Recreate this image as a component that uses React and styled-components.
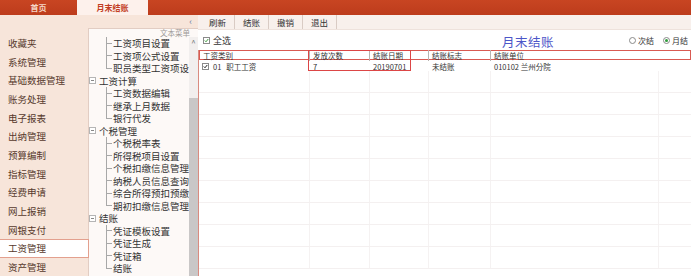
import React from 'react';
import styled, { createGlobalStyle } from 'styled-components';

const GlobalStyle = createGlobalStyle`
  html, body {
    margin: 0;
    padding: 0;
    background: #fff;
  }
  body {
    font-family: "Noto Sans CJK SC", "Noto Sans", sans-serif;
    color: #333;
  }
`;

const menu = [
  '收藏夹', '系统管理', '基础数据管理', '账务处理', '电子报表', '出纳管理', '预算编制',
  '指标管理', '经费申请', '网上报销', '网银支付', '工资管理', '资产管理',
];

const tree = [
  { t: '工资项目设置', lvl: 2 },
  { t: '工资项公式设置', lvl: 2 },
  { t: '职员类型工资项设', lvl: 2, last: true },
  { t: '工资计算', lvl: 1 },
  { t: '工资数据编辑', lvl: 2 },
  { t: '继承上月数据', lvl: 2 },
  { t: '银行代发', lvl: 2, last: true },
  { t: '个税管理', lvl: 1 },
  { t: '个税税率表', lvl: 2 },
  { t: '所得税项目设置', lvl: 2 },
  { t: '个税扣缴信息管理', lvl: 2 },
  { t: '纳税人员信息查询', lvl: 2 },
  { t: '综合所得预扣预缴', lvl: 2 },
  { t: '期初扣缴信息管理', lvl: 2, last: true },
  { t: '结账', lvl: 1 },
  { t: '凭证模板设置', lvl: 2 },
  { t: '凭证生成', lvl: 2 },
  { t: '凭证箱', lvl: 2 },
  { t: '结账', lvl: 2, last: true },
];

const columns = ['工资类别', '发放次数', '结账日期', '结账标志', '结账单位'];

const Page = styled.div`
  width: 691px;
  height: 276px;
  overflow: hidden;
  display: grid;
  grid-template-rows: 15px 1fr;
`;

const TabBar = styled.div`
  display: flex;
  background: linear-gradient(#c84522, #bd3c1c);
`;

const Tab = styled.div`
  width: ${p => p.w}px;
  display: flex;
  align-items: center;
  justify-content: center;
  font-size: 8px;
  font-weight: 700;
  color: ${p => (p.active ? '#c23c22' : '#f5d6c6')};
  background: ${p => (p.active ? '#fdf1ec' : 'transparent')};
`;

const Body = styled.div`
  display: flex;
  min-height: 0;
`;

const LeftPane = styled.div`
  width: 198px;
  flex: none;
  background: #f7e5da;
  display: grid;
  grid-template-columns: 88px 110px;
  grid-template-rows: 13px 1fr;
  min-height: 0;
`;

const Sidebar = styled.div`
  grid-row: 1 / 3;
  padding-top: 18.7px;
  position: relative;
  z-index: 1;
`;

const MenuItem = styled.div`
  height: 18.67px;
  box-sizing: border-box;
  display: flex;
  align-items: center;
  padding-left: 8px;
  font-size: 9.5px;
  color: #56392c;
  background: ${p => (p.active ? '#fff' : 'transparent')};
  border: 1px solid ${p => (p.active ? '#e3a08e' : 'transparent')};
  border-left: none;
  margin-right: ${p => (p.active ? '-1px' : '0')};
`;

const Collapse = styled.div`
  display: flex;
  align-items: center;
  justify-content: flex-end;
  padding-right: 6px;
  font-size: 9px;
  color: #6a7ca6;
`;

const TreePanel = styled.div`
  background: #fdf9f7;
  border-left: 1px solid #e2cdc3;
  border-top: 1px solid #e2cdc3;
  display: flex;
  flex-direction: column;
  min-height: 0;
`;

const TreeHeader = styled.div`
  height: 8px;
  text-align: right;
  padding-right: 8px;
  font-size: 7.5px;
  line-height: 8px;
  color: #a09a98;
`;

const TreeBody = styled.div`
  flex: 1;
  display: flex;
  min-height: 0;
`;

const TreeList = styled.div`
  flex: 1;
  overflow: hidden;
  white-space: nowrap;
`;

const TreeRow = styled.div`
  height: 12.5px;
  display: flex;
  align-items: center;
  padding-left: ${p => (p.lvl === 1 ? 0 : 17)}px;
  font-size: 9.5px;
  color: #333;
`;

const Connector = styled.span`
  flex: none;
  align-self: stretch;
  width: 6px;
  margin-right: 1px;
  background:
    linear-gradient(#a8a8a8, #a8a8a8) left top / 1px ${p => (p.last ? '50%' : '100%')} no-repeat,
    linear-gradient(#a8a8a8, #a8a8a8) left center / 100% 1px no-repeat;
`;

const Expander = styled.svg`
  flex: none;
  margin-right: 3px;
`;

const Scrollbar = styled.div`
  width: 9px;
  flex: none;
  display: flex;
  flex-direction: column;
  background: #f2efee;
`;

const ScrollUp = styled.div`
  height: 11px;
  display: flex;
  align-items: center;
  justify-content: center;
  font-size: 8px;
  color: #777;
`;

const Thumb = styled.div`
  flex: 1;
  margin-top: 50px;
  background: #c9c7c7;
`;

const Main = styled.div`
  flex: 1;
  display: flex;
  flex-direction: column;
  min-width: 0;
`;

const Toolbar = styled.div`
  height: 15px;
  flex: none;
  display: flex;
  padding-left: 3px;
  background: #f8f0ec;
  border-bottom: 1px solid #eee2dc;
  box-sizing: border-box;
`;

const ToolButton = styled.div`
  width: 34px;
  box-sizing: border-box;
  border-right: 1px solid #d9cbc4;
  display: flex;
  align-items: center;
  justify-content: center;
  font-size: 8.5px;
  color: #333;
`;

const OptionsRow = styled.div`
  height: 20px;
  flex: none;
  display: flex;
  align-items: center;
  padding-left: 5px;
  padding-right: 3px;
`;

const SelectAll = styled.div`
  width: 299px;
  display: flex;
  align-items: center;
  font-size: 9px;
  color: #333;
  gap: 3px;
`;

const Box = styled.span`
  width: 7px;
  height: 7px;
  box-sizing: border-box;
  border: 1px solid #8a8a8a;
  background: #fff;
  display: inline-flex;
  align-items: center;
  justify-content: center;
  flex: none;
`;

const Title = styled.div`
  font-size: 12.5px;
  letter-spacing: 0.5px;
  color: #4c56c8;
  margin-top: 2px;
`;

const Radios = styled.div`
  margin-left: auto;
  display: flex;
  gap: 9px;
`;

const Radio = styled.div`
  display: flex;
  align-items: center;
  gap: 2px;
  font-size: 8px;
  color: #333;
`;

const Circle = styled.span`
  width: 7px;
  height: 7px;
  box-sizing: border-box;
  border-radius: 50%;
  border: 1px solid #8a8a8a;
  background: #fff;
  display: inline-flex;
  align-items: center;
  justify-content: center;
  &::after {
    content: '';
    width: 3px;
    height: 3px;
    border-radius: 50%;
    background: ${p => (p.checked ? '#2f9b3c' : 'transparent')};
  }
`;

const TableWrap = styled.div`
  flex: 1;
  position: relative;
  border-left: 1px solid #d98b80;
  overflow: hidden;
`;

const Row = styled.div`
  display: grid;
  grid-template-columns: 110px 60px 59px 62px 168px 33px;
  width: max-content;
  height: ${p => p.h}px;
  box-shadow: ${p => (p.head ? 'inset 0 0 0 1px #d95a52' : 'none')};
  border-bottom: 1px solid ${p => (p.faint ? '#f4f0f0' : 'transparent')};
  box-sizing: border-box;
`;

const Cell = styled.div`
  display: flex;
  align-items: center;
  gap: 4px;
  padding-left: 3px;
  font-size: 7.5px;
  color: #333;
  white-space: nowrap;
  border-left: 1px solid ${p => (p.line ? p.line : 'transparent')};
`;

const Highlight = styled.div`
  position: absolute;
  left: 109px;
  top: 0;
  width: 103px;
  height: 21px;
  box-sizing: border-box;
  border: 1.5px solid #dc4646;
  pointer-events: none;
`;

const Check = ({ color }) => (
  <svg width="5" height="5" viewBox="0 0 10 10">
    <path d="M1.5 5 L4 7.5 L8.5 2" fill="none" stroke={color} strokeWidth="2" />
  </svg>
);

const Minus = () => (
  <Expander width="7" height="7" viewBox="0 0 7 7">
    <rect x="0.5" y="0.5" width="6" height="6" fill="#fff" stroke="#b5b5b5" />
    <line x1="2" y1="3.5" x2="5" y2="3.5" stroke="#888" />
  </Expander>
);

export default function App() {
  const empty = Array.from({ length: 9 });
  return (
    <>
      <GlobalStyle />
      <Page>
        <TabBar>
          <Tab w={77}>首页</Tab>
          <Tab w={71} active>月末结账</Tab>
        </TabBar>
        <Body>
          <LeftPane>
            <Sidebar>
              {menu.map(m => (
                <MenuItem key={m} active={m === '工资管理'}>{m}</MenuItem>
              ))}
            </Sidebar>
            <Collapse>‹</Collapse>
            <TreePanel>
              <TreeHeader>文本菜单</TreeHeader>
              <TreeBody>
                <TreeList>
                  {tree.map((n, i) => (
                    <TreeRow key={i} lvl={n.lvl}>
                      {n.lvl === 1 ? <Minus /> : <Connector last={n.last} />}
                      {n.t}
                    </TreeRow>
                  ))}
                </TreeList>
                <Scrollbar>
                  <ScrollUp>^</ScrollUp>
                  <Thumb />
                </Scrollbar>
              </TreeBody>
            </TreePanel>
          </LeftPane>
          <Main>
            <Toolbar>
              {['刷新', '结账', '撤销', '退出'].map(b => (
                <ToolButton key={b}>{b}</ToolButton>
              ))}
            </Toolbar>
            <OptionsRow>
              <SelectAll>
                <Box><Check color="#3a9a3a" /></Box>
                全选
              </SelectAll>
              <Title>月末结账</Title>
              <Radios>
                <Radio><Circle />次结</Radio>
                <Radio><Circle checked />月结</Radio>
              </Radios>
            </OptionsRow>
            <TableWrap>
              <Row h={11} head>
                {columns.map((c, i) => (
                  <Cell key={c} line={i > 0 ? '#b9b3b1' : null}>{c}</Cell>
                ))}
                <Cell />
              </Row>
              <Row h={10}>
                <Cell style={{ paddingLeft: 2 }}>
                  <Box><Check color="#222" /></Box>
                  <span>01</span>
                  <span style={{ marginLeft: 1 }}>职工工资</span>
                </Cell>
                <Cell>7</Cell>
                <Cell>20190701</Cell>
                <Cell>未结账</Cell>
                <Cell>010102 兰州分院</Cell>
                <Cell />
              </Row>
              {empty.map((_, i) => (
                <Row key={i} h={22} faint>
                  <Cell />
                  <Cell line="#f5f2f2" />
                  <Cell line="#f5f2f2" />
                  <Cell line="#f5f2f2" />
                  <Cell line="#f5f2f2" />
                  <Cell line="#f5f2f2" />
                </Row>
              ))}
              <Highlight />
            </TableWrap>
          </Main>
        </Body>
      </Page>
    </>
  );
}
